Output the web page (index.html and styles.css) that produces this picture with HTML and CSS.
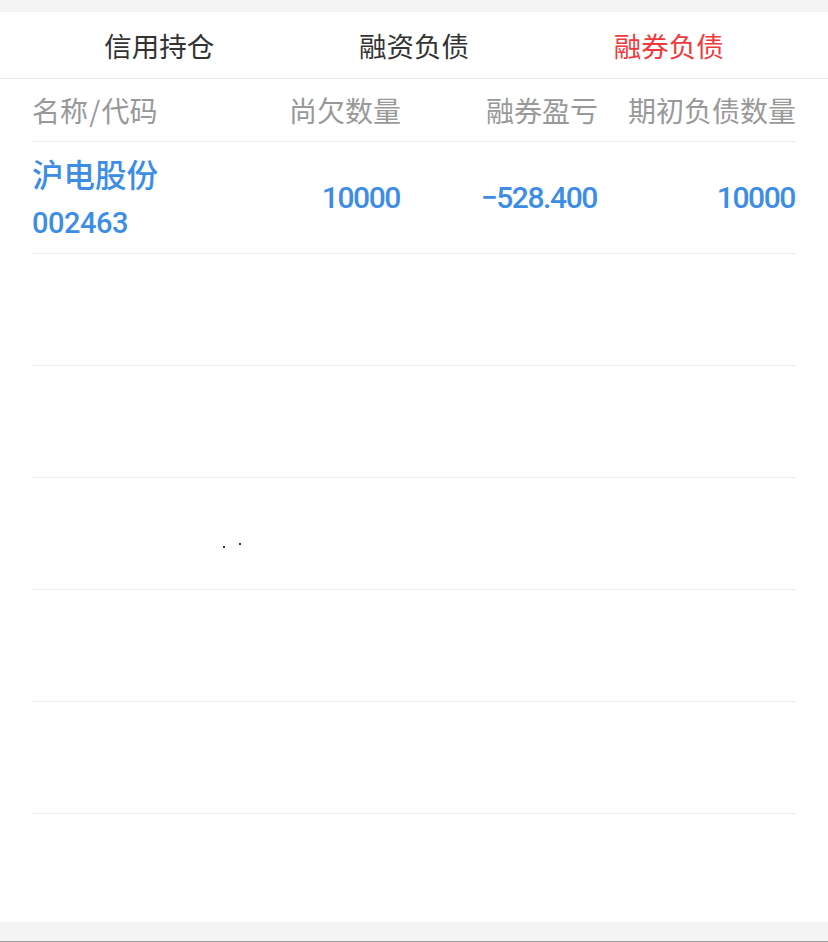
FILE: index.html
```html
<!DOCTYPE html>
<html>
<head>
  <meta charset="utf-8">
  <link rel="stylesheet" href="styles.css">
</head>

<body>
  <div class="app">
    <div class="tabs">
      <div class="tab">信用持仓</div>
      <div class="tab">融资负债</div>
      <div class="tab active">融券负债</div>
    </div>

    <div class="table">
      <div class="row head">
        <div class="cell left">名称 / 代码</div>
        <div class="cell">尚欠数量</div>
        <div class="cell">融券盈亏</div>
        <div class="cell">期初负债数量</div>
      </div>

      <div class="row item">
        <div class="cell left">
          <div class="name">沪电股份</div>
          <div class="code">002463</div>
        </div>
        <div class="cell num">10000</div>
        <div class="cell num">&minus;528.400</div>
        <div class="cell num">10000</div>
      </div>

      <div class="row item"></div>
      <div class="row item"></div>
      <div class="row item"></div>
      <div class="row item"></div>
      <div class="row item"></div>
    </div>

    <!-- loading dots -->
    <span class="dot dot1"></span>
    <span class="dot dot2"></span>
  </div>
  <div class="bottom"></div>
</body>
</html>
```

FILE: styles.css
```css
body {
  margin: 0;
  background-color: #f4f4f4;
  font-family: "Noto Sans CJK SC", sans-serif;
}

.app {
  position: relative;
  margin-top: 12px;
  height: 910px;
  background-color: #fff;
}

.tabs {
  display: grid;
  grid-template-columns: 1fr 1fr 1fr;
  height: 66px;
  padding: 0 32px;
  border-bottom: solid 1px #ebebeb;
}

.tab {
  display: flex;
  align-items: center;
  justify-content: center;
  font-size: 27.5px;
  color: #333;
}

.tab.active {
  color: #f0393b;
}

.table {
  margin: 0 32px;
}

.row {
  display: grid;
  grid-template-columns: 172px 197px 197px 198px;
  border-bottom: solid 1px #ececec;
}

.row.head {
  height: 62px;
}

.row.item {
  height: 111px;
}

.cell {
  display: flex;
  align-items: center;
  justify-content: flex-end;
}

.cell.left {
  justify-content: flex-start;
}

.head .cell {
  font-size: 28px;
  color: #999;
  white-space: pre;
  word-spacing: -5px;
}

.item .cell.left {
  flex-direction: column;
  align-items: flex-start;
  justify-content: center;
  color: #3d8de6;
}

.name {
  font-size: 31.5px;
  font-weight: 500;
  line-height: 50px;
}

.code,
.num {
  font-family: Roboto, sans-serif;
  font-size: 30px;
  font-weight: 500;
  letter-spacing: -1.4px;
  color: #3d8de6;
}

.num {
  margin-right: 1px;
}

.code {
  font-size: 29px;
  letter-spacing: -0.5px;
  line-height: 50px;
}

.dot {
  position: absolute;
  width: 2px;
  height: 2px;
  background-color: #333;
}

.dot1 {
  left: 223px;
  top: 534px;
}

.dot2 {
  left: 239px;
  top: 531px;
}

.bottom {
  height: 19px;
  border-bottom: solid 1px #9a9a9a;
}
```
